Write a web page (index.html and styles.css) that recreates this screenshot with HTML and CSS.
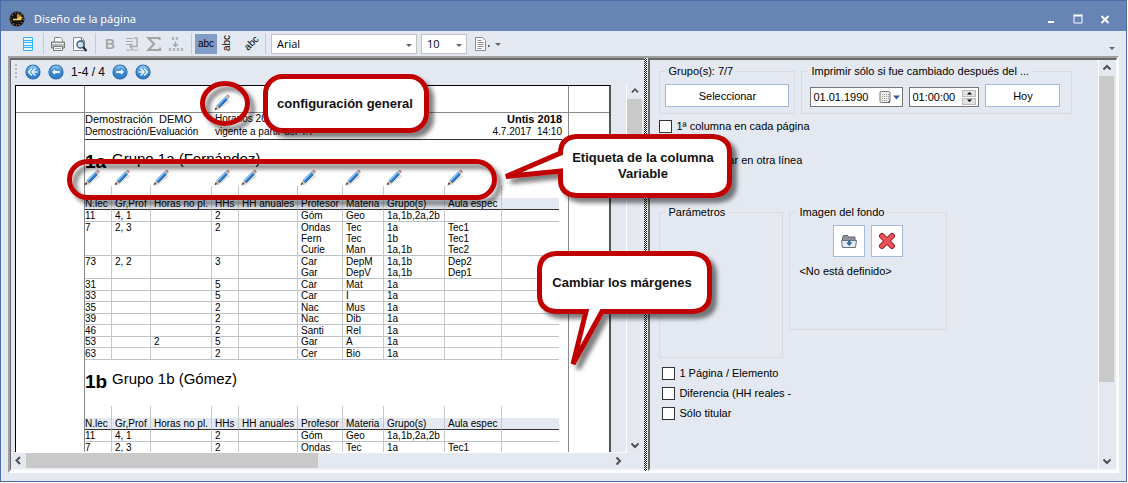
FILE: index.html
```html
<!DOCTYPE html>
<html lang="es">
<head>
<meta charset="utf-8">
<title>Diseño de la página</title>
<link rel="stylesheet" href="styles.css">
</head>
<body>
<svg class="defs" width="0" height="0" aria-hidden="true">
  <defs>
    <linearGradient id="ball" x1="0" y1="0" x2="0" y2="1"><stop offset="0" stop-color="#9fd0f3"/><stop offset=".45" stop-color="#3c8fd6"/><stop offset="1" stop-color="#2a7bc8"/></linearGradient>
    <symbol id="pencil" viewBox="0 0 17 17">
      <path d="M3 16 15.500 6.500" stroke="#000" stroke-opacity=".15" stroke-width="2"/>
      <path d="M.8 16 2.500 11.300 5.300 13.900z" fill="#dcb489"/>
      <path d="M.6 16.200 1.500 13.500 3.300 15.100z" fill="#333"/>
      <path d="M2.500 11.300 11 2.800 13.600 5.600 5.300 13.900z" fill="#2f7fd0"/>
      <path d="M5.100 13.700 13.400 5.400" stroke="#2b5c94"/>
      <path d="M3.200 11.700 11.500 3.400" stroke="#a5d2f7" stroke-width="1.300"/>
      <path d="M11 2.800 12.600 1.300 15.200 4.100 13.600 5.600z" fill="#b4bac2"/>
      <path d="M12.600 1.300Q13.800.3 15 1.500T15.200 4.100z" fill="#cf7a70"/>
    </symbol>
    <symbol id="ball-left" viewBox="0 0 16 16"><circle cx="8" cy="8" r="7" fill="url(#ball)" stroke="#2a6cb0" stroke-width="1.200"/><path d="M3.500 8 7.500 4.300v2.200h4.800v3H7.500v2.200z" fill="#e8f4fd" stroke="#1d5b9e" stroke-width=".5"/></symbol>
    <symbol id="ball-first" viewBox="0 0 16 16"><circle cx="8" cy="8" r="7" fill="url(#ball)" stroke="#2a6cb0" stroke-width="1.200"/><path d="M7 4.500 3.600 8 7 11.500M12.800 8H7.500M10.500 4.500 7 8 10.500 11.500" fill="none" stroke="#e8f4fd" stroke-width="1.600"/></symbol>
    <symbol id="up" viewBox="0 0 16 16"><path d="M4.500 9.500 8 6l3.500 3.500" fill="none" stroke="#505050" stroke-width="2"/></symbol>
  </defs>
</svg>

<div class="window">
  <header class="titlebar">
    <svg class="logo" width="16" height="16" viewBox="0 0 16 16"><circle cx="8" cy="8" r="7.500" fill="#17120e"/><circle cx="8" cy="8" r="6" fill="none" stroke="#a9834c" stroke-width="1.400" stroke-dasharray="1 2.140"/><path d="M8 8.500 8 3A5 5 0 0 1 13 8.500z" fill="#c98d2c"/><path d="M8 8.500 12.500 6M4 8.500h8" stroke="#f9cf63" stroke-width="1.300"/></svg>
    <h1>Diseño de la página</h1>
    <button class="win" aria-label="Minimizar"><svg width="10" height="10"><path d="M2 8h6" stroke="#fff" stroke-width="2"/></svg></button>
    <button class="win" aria-label="Maximizar"><svg width="10" height="10"><path d="M1 1.500h8v7.500H1z" fill="none" stroke="#fff"/><path d="M.5 1.500h9" stroke="#fff" stroke-width="2"/></svg></button>
    <button class="win" aria-label="Cerrar"><svg width="10" height="10"><path d="M1.500 2 8.500 9M8.500 2 1.500 9" stroke="#fff" stroke-width="1.800"/></svg></button>
  </header>

  <div class="toolbar">
    <button class="tool" aria-label="Lista"><svg width="16" height="16"><path d="M3.500 1.500h9v3h-9zM3.500 6.500h9v3h-9zM3.500 11.500h9v3h-9zM3.500 4.500v8M12.500 4.500v8" fill="#e6f7ff" stroke="#35b0f4"/></svg></button>
    <span class="sep"></span>
    <button class="tool" aria-label="Imprimir"><svg width="16" height="16"><path d="M4.500 6V1.500h6l2 2V6" fill="#fff" stroke="#888"/><path d="M1.500 6h13v6h-13z" fill="#b4b8bc" stroke="#777"/><path d="M2 7.500h12" stroke="#eee"/><path d="M3.500 10.500h9v4h-9z" fill="#fafafa" stroke="#777"/><path d="M5 12.500h6" stroke="#aaa"/></svg></button>
    <button class="tool" aria-label="Vista previa"><svg width="16" height="16"><path d="M1.500 1.500h8l3 3v10h-11z" fill="#fff" stroke="#8c8c8c"/><path d="M9.500 1.500v3h3" fill="none" stroke="#8c8c8c"/><circle cx="8.500" cy="8.500" r="3.500" fill="#c4e3f7" stroke="#3d5368" stroke-width="1.300"/><path d="M11 11l3.500 4" stroke="#26313e" stroke-width="2.200"/></svg></button>
    <span class="sep"></span>
    <button class="tool bold" aria-label="Negrita"><b>B</b></button>
    <button class="tool" aria-label="Ajustar"><svg width="16" height="16"><path d="M2 2.500h7M2 5.500h7M2 8.500h5M2 14h12.500" stroke="#a8a8a8"/><path d="M10 2h3v8.500H6M8.500 8 6 10.500 8.500 13" fill="none" stroke="#aaa" stroke-width="1.400"/></svg></button>
    <button class="tool" aria-label="Suma"><svg width="16" height="16"><path d="M13.500 4V2H2.500L8 8l-5.500 6H14v-2.500" fill="none" stroke="#a5a5a5" stroke-width="2.200"/></svg></button>
    <button class="tool" aria-label="Insertar línea"><svg width="16" height="16"><path d="M4 1l2 3M6 1 4 4M8 1l2 3M10 1 8 4M1 12l2 3M3 12l-2 3M5 12l2 3M7 12l-2 3M9 12l2 3M11 12l-2 3M13 12l2 3M15 12l-2 3" stroke="#999" stroke-width=".8"/><path d="M7.500 5.500v4M5 8l2.500 2.500L10 8" stroke="#a5a5a5" fill="none" stroke-width="1.300"/></svg></button>
    <span class="sep"></span>
    <button class="tool active" aria-label="Horizontal"><svg width="20" height="20"><text class="abc" x="2" y="13">abc</text></svg></button>
    <button class="tool" aria-label="Vertical"><svg width="20" height="20"><text class="abc" transform="translate(12 17) rotate(-90)">abc</text></svg></button>
    <button class="tool" aria-label="Diagonal"><svg width="20" height="20"><text class="abc" transform="translate(8 17) rotate(-45)">abc</text></svg></button>
    <span class="sep"></span>
    <span class="combo font"><select aria-label="Fuente"><option>Arial</option></select></span>
    <span class="combo size"><select aria-label="Tamaño"><option>10</option></select></span>
    <button class="tool doc" aria-label="Página"><svg width="28" height="16"><path d="M1.500 1.500h7l3 3v10h-10z" fill="#fff" stroke="#8c8c8c"/><path d="M3.500 4.500h4M3.500 6.500h6M3.500 8.500h6M3.500 10.500h6M3.500 12.500h4" stroke="#8c8c8c"/><path d="M14 9h1.500v2H14z" fill="#555"/><path d="M21 7h6l-3 3z" fill="#666"/></svg></button>
    <button class="more" aria-label="Más"><svg width="6" height="4"><path d="M0 0h6L3 3z" fill="#666"/></svg></button>
  </div>

  <main class="workspace">
    <section class="left">
      <nav class="pager">
        <span class="grip"></span>
        <button aria-label="Primera"><svg width="16" height="16"><use href="#ball-first"/></svg></button>
        <button aria-label="Anterior"><svg width="16" height="16"><use href="#ball-left"/></svg></button>
        <span class="count">1-4 / 4</span>
        <button class="flip" aria-label="Siguiente"><svg width="16" height="16"><use href="#ball-left"/></svg></button>
        <button class="flip" aria-label="Última"><svg width="16" height="16"><use href="#ball-first"/></svg></button>
      </nav>
      <div class="view">
        <div class="preview">
          <article class="paper">
            <div class="margin corner"></div>
            <div class="margin top"><svg class="pencil" width="17" height="17"><use href="#pencil"/></svg></div>
            <div class="margin end"></div>
            <div class="side"></div>
            <div class="content">
              <header class="report">
                <span class="big">Demostración&nbsp; DEMO</span><span class="big mid">Horarios 2017</span><b class="big">Untis 2018</b>
                <span>Demostración/Evaluación</span><span>vigente a partir del 4.7</span><span>4.7.2017&nbsp; 14:10</span>
              </header>
              <h2 class="group"><b>1a</b><span>Grupo 1a (Fernández)</span></h2>
              <table class="plan">
                <colgroup><col class="c27"><col class="c39"><col class="c61"><col class="c27"><col class="c59"><col class="c45"><col class="c41"><col class="c61"><col class="c57"><col class="c57"></colgroup>
                <thead>
                  <tr class="pencils"><td><svg width="17" height="17"><use href="#pencil"/></svg></td><td><svg width="17" height="17"><use href="#pencil"/></svg></td><td><svg width="17" height="17"><use href="#pencil"/></svg></td><td><svg width="17" height="17"><use href="#pencil"/></svg></td><td><svg width="17" height="17"><use href="#pencil"/></svg></td><td><svg width="17" height="17"><use href="#pencil"/></svg></td><td><svg width="17" height="17"><use href="#pencil"/></svg></td><td><svg width="17" height="17"><use href="#pencil"/></svg></td><td><svg width="17" height="17"><use href="#pencil"/></svg></td><td></td></tr>
                  <tr><th>N.lec</th><th>Gr,Prof</th><th>Horas no pl.</th><th>HHs</th><th>HH anuales</th><th>Profesor</th><th>Materia</th><th>Grupo(s)</th><th>Aula espec</th><th></th></tr>
                </thead>
                <tbody>
                  <tr><td>11</td><td>4, 1</td><td></td><td>2</td><td></td><td>Góm</td><td>Geo</td><td>1a,1b,2a,2b</td><td></td><td></td></tr>
                  <tr><td>7</td><td>2, 3</td><td></td><td>2</td><td></td><td>Ondas<br>Fern<br>Curie</td><td>Tec<br>Tec<br>Man</td><td>1a<br>1b<br>1a,1b</td><td>Tec1<br>Tec1<br>Tec2</td><td></td></tr>
                  <tr><td>73</td><td>2, 2</td><td></td><td>3</td><td></td><td>Car<br>Gar</td><td>DepM<br>DepV</td><td>1a,1b<br>1a,1b</td><td>Dep2<br>Dep1</td><td></td></tr>
                  <tr><td>31</td><td></td><td></td><td>5</td><td></td><td>Car</td><td>Mat</td><td>1a</td><td></td><td></td></tr>
                  <tr class="tight"><td>33</td><td></td><td></td><td>5</td><td></td><td>Car</td><td>I</td><td>1a</td><td></td><td></td></tr>
                  <tr><td>35</td><td></td><td></td><td>2</td><td></td><td>Nac</td><td>Mus</td><td>1a</td><td></td><td></td></tr>
                  <tr class="tight"><td>39</td><td></td><td></td><td>2</td><td></td><td>Nac</td><td>Dib</td><td>1a</td><td></td><td></td></tr>
                  <tr><td>46</td><td></td><td></td><td>2</td><td></td><td>Santi</td><td>Rel</td><td>1a</td><td></td><td></td></tr>
                  <tr class="tight"><td>53</td><td></td><td>2</td><td>5</td><td></td><td>Gar</td><td>A</td><td>1a</td><td></td><td></td></tr>
                  <tr><td>63</td><td></td><td></td><td>2</td><td></td><td>Cer</td><td>Bio</td><td>1a</td><td></td><td></td></tr>
                </tbody>
              </table>
              <h2 class="group"><b>1b</b><span>Grupo 1b (Gómez)</span></h2>
              <table class="plan">
                <colgroup><col class="c27"><col class="c39"><col class="c61"><col class="c27"><col class="c59"><col class="c45"><col class="c41"><col class="c61"><col class="c57"><col class="c57"></colgroup>
                <thead>
                  <tr class="pencils"><td></td><td></td><td></td><td></td><td></td><td></td><td></td><td></td><td></td><td></td></tr>
                  <tr><th>N.lec</th><th>Gr,Prof</th><th>Horas no pl.</th><th>HHs</th><th>HH anuales</th><th>Profesor</th><th>Materia</th><th>Grupo(s)</th><th>Aula espec</th><th></th></tr>
                </thead>
                <tbody>
                  <tr><td>11</td><td>4, 1</td><td></td><td>2</td><td></td><td>Góm</td><td>Geo</td><td>1a,1b,2a,2b</td><td></td><td></td></tr>
                  <tr><td>7</td><td>2, 3</td><td></td><td>2</td><td></td><td>Ondas</td><td>Tec</td><td>1a</td><td>Tec1</td><td></td></tr>
                </tbody>
              </table>
            </div>
            <div class="side end"></div>
          </article>
        </div>
        <div class="vbar"><svg width="16" height="14" viewBox="0 1 16 14"><use href="#up"/></svg><span class="thumb short"></span><svg class="down" width="16" height="16"><use href="#up"/></svg></div>
      </div>
      <div class="hbar"><svg class="west" width="15" height="16"><use href="#up" width="16" height="16"/></svg><span class="thumb wide"></span><svg class="east" width="16" height="16"><use href="#up"/></svg></div>
    </section>

    <div class="splitter"></div>

    <section class="right">
      <form class="options">
        <div class="row">
          <fieldset class="pick"><legend>Grupo(s): 7/7</legend><button type="button" class="btn grow">Seleccionar</button></fieldset>
          <fieldset class="when"><legend>Imprimir sólo si fue cambiado después del ...</legend>
            <span class="field date"><input type="text" aria-label="Fecha" value="01.01.1990"><button type="button" aria-label="Calendario"><svg width="22" height="14"><rect x="1" y="1.500" width="10" height="11" rx="1.500" fill="#eee" stroke="#777"/><path d="M3 4.500h7M3 6.500h7M3 8.500h7M3 10.500h5" stroke="#999" stroke-dasharray="1 1"/><path d="M8 13l3-3v3z" fill="#666"/><path d="M14 5.500h7l-3.500 4z" fill="#345e9e"/></svg></button></span>
            <span class="field time"><input type="text" aria-label="Hora" value="01:00:00"><span class="spin"><button type="button" aria-label="Más"><svg width="7" height="4"><path d="M1 3.500h5L3.500 1z"/></svg></button><button type="button" aria-label="Menos"><svg width="7" height="4"><path d="M1 .5h5L3.500 3z"/></svg></button></span></span>
            <button type="button" class="btn grow">Hoy</button>
          </fieldset>
        </div>
        <label class="check first"><input type="checkbox">1ª columna en cada página</label>
        <label class="check second"><input type="checkbox">Continuar en otra línea</label>
        <div class="row boxes">
          <fieldset class="params"><legend>Parámetros</legend></fieldset>
          <fieldset class="image"><legend>Imagen del fondo</legend>
            <div class="pair">
              <button type="button" class="btn sq" aria-label="Abrir"><svg width="18" height="18"><path d="M2.500 15V5.500l1-2h4l1 1.500h6.500V9" fill="#8c939b" stroke="#5e656c"/><path d="M1.500 8.500h15l-1 7h-13z" fill="#e4ebf3" stroke="#67727e"/><path d="M8 8.500h2.500v2h2L9.200 14 6 10.500h2z" fill="#3c6a9c"/></svg></button>
              <button type="button" class="btn sq" aria-label="Borrar"><svg width="18" height="18"><path d="M4 4 14 14M14 4 4 14" stroke="#8e2630" stroke-width="6" stroke-linecap="round"/><path d="M4 4 14 14M14 4 4 14" stroke="#ee5057" stroke-width="4" stroke-linecap="round"/></svg></button>
            </div>
            <p>&lt;No está definido&gt;</p>
          </fieldset>
        </div>
        <div class="checks">
          <label class="check"><input type="checkbox">1 Página / Elemento</label>
          <label class="check"><input type="checkbox">Diferencia (HH reales -</label>
          <label class="check"><input type="checkbox">Sólo titular</label>
        </div>
      </form>
      <div class="vbar"><svg width="16" height="16"><use href="#up"/></svg><span class="thumb tall"></span><svg class="down" width="16" height="16"><use href="#up"/></svg></div>
    </section>
  </main>

</div>

<svg class="notes" width="1128" height="483" viewBox="0 0 1128 483">
  <defs><filter id="shade" x="-20%" y="-20%" width="150%" height="160%"><feDropShadow dx="5" dy="5" stdDeviation="2" flood-color="#000" flood-opacity=".5"/></filter></defs>
  <g fill="none" stroke="#c00000" stroke-width="5">
    <ellipse cx="225" cy="103.500" rx="22.500" ry="20" filter="url(#shade)"/>
    <rect x="69.500" y="161.500" width="425" height="36" rx="18" filter="url(#shade)"/>
    <rect x="265.500" y="76.500" width="161" height="54" rx="17" fill="#fff" filter="url(#shade)"/>
    <path fill="#fff" filter="url(#shade)" d="M576 136.500H713Q729.500 138 729.500 152V180Q729.500 194 713 195.500H576Q560.500 194 560.500 180V171L506 176.500 560.500 153Q560.500 138 576 136.500z"/>
    <path fill="#fff" filter="url(#shade)" d="M556 253.500H693Q709.500 255 709.500 270V295Q709.500 310 693 311.500H602L573 364 586 311.500H556Q539.500 310 539.500 295V270Q539.500 255 556 253.500z"/>
  </g>
  <g class="note">
    <text x="345" y="108">configuración general</text>
    <text x="643" y="162">Etiqueta de la columna</text>
    <text x="643" y="178">Variable</text>
    <text x="622" y="287">Cambiar los márgenes</text>
  </g>
</svg>
</body>
</html>
```
FILE: styles.css
```css
* { box-sizing: border-box; }
body { margin: 0; background: #fff; color: #000; font: 11px/14px "Liberation Sans", Arial, sans-serif; }
button, input, select { font: inherit; color: inherit; margin: 0; padding: 0; border: 0; background: none; }
button { display: flex; align-items: center; justify-content: center; }
svg { display: block; flex: none; }
.defs, .notes { position: absolute; top: 0; left: 0; }
.notes { pointer-events: none; }
.note text { font: bold 13px "Liberation Sans", Arial, sans-serif; fill: #111; text-anchor: middle; }

.window { display: flex; flex-direction: column; height: calc(100vh - 1px); margin-right: 1px; background: #e4e9f1; border: 1px solid #4a6ea9; overflow: hidden; }
.titlebar { display: flex; align-items: center; height: 30px; padding: 6px 12px 0 8px; background: #6684b4; color: #fff; }
.titlebar h1 { flex: 1; margin: 0 0 0 9px; font: 11px/16px "Noto Sans", sans-serif; }
.win { width: 18px; height: 18px; margin-left: 9px; }

.toolbar { display: flex; align-items: center; height: 25px; padding: 0 10px 0 16px; flex: none; }
.tool { width: 22px; height: 20px; flex: none; }
.tool.active { background: #829cc8; }
.tool.doc { width: 30px; margin-left: 6px; }
.tool.bold { color: #a5a5a5; font-size: 14px; }
.abc { font: 10px "Liberation Sans", sans-serif; }
.sep { width: 1px; height: 21px; margin: 0 3px 0 4px; background: #c6cad0; }
.combo { position: relative; height: 20px; border: 1px solid #c3c3c3; background: #fff; margin-left: 2px; }
.combo::after { content: ""; position: absolute; right: 4px; top: 9px; border: 3px solid transparent; border-top-color: #666; border-bottom: 0; }
.combo select { width: 100%; height: 18px; padding-left: 5px; appearance: none; font: 11px/18px "Open Sans", sans-serif; }
.font { width: 146px; }
.size { width: 46px; margin-left: 4px; }
.more { margin: 10px 1px 0 auto; }

.workspace { flex: 1; min-height: 0; display: grid; grid-template-columns: minmax(0, 635fr) 4px minmax(0, 469fr); margin: 0 7px 8px 7px; border: 2px solid #a0a0a0; border-right-color: #fff; border-bottom-color: #fff; }
.left { display: flex; flex-direction: column; min-height: 0; border: solid #696969; border-width: 2px 0 0 1px; border-bottom: 2px solid #f5f7fa; }
.pager { display: flex; align-items: center; height: 25px; padding: 0 0 2px 4px; flex: none; }
.grip { width: 2px; height: 15px; margin-right: 8px; background: repeating-linear-gradient(#b4b8be 0 2px, transparent 2px 4px); }
.pager button { width: 16px; height: 16px; margin-right: 7px; }
.count { width: 41px; font-size: 12px; }
.flip svg { transform: scaleX(-1); }
.view { flex: 1; display: flex; min-height: 0; }
.preview { flex: 1; min-width: 0; overflow: hidden; padding-left: 4px; border-right: 1px solid #fff; border-bottom: 1px solid #fff; }
.vbar { width: 16px; margin-right: 1px; display: flex; flex-direction: column; }
.thumb { background: #c9c9c9; }
.vbar .thumb { margin-right: 1px; }
.vbar .down { margin-top: auto; transform: scaleY(-1); }
.short { height: 50px; }
.tall { flex: 0 0 306px; }
.hbar { display: flex; height: 16px; flex: none; margin-right: 18px; }
.wide { width: 292px; height: 15px; }
.west { transform: rotate(-90deg); }
.east { margin-left: auto; transform: rotate(90deg); }

.paper { display: grid; grid-template: 27px auto / 68px 1fr 40px; width: 596px; min-height: 600px; background: #fff; border: 1px solid #000; border-right: 2px solid #555; }
.margin { border-bottom: 1px solid #8a8a8a; }
.top { padding: 8px 0 0 129px; }
.top, .content { border-left: 1px solid #8a8a8a; border-right: 1px solid #8a8a8a; }
.report { display: grid; grid-template-columns: 130px 1fr auto; grid-template-rows: 12px 14px; margin-right: 6px; border-bottom: 1px solid #333; font-size: 10px; line-height: 14px; white-space: nowrap; }
.report .big { font-size: 11px; line-height: 12px; }
.report .mid { font-size: 10px; }
.report > :nth-child(3n) { text-align: right; }
.group { display: grid; grid-template-columns: 27px 1fr; height: 46px; margin: 0; padding-top: 9px; font: 15px/20px "Liberation Sans", Arial, sans-serif; }
.group b { font-size: 19px; margin-top: 3px; }
.plan { table-layout: fixed; width: 474px; border-spacing: 0; font-size: 10px; line-height: 11px; white-space: nowrap; }
.plan td, .plan th { height: 12px; padding: 0 0 0 3px; border-right: 1px solid #c4c8cc; border-bottom: 1px solid #bcc2c8; text-align: left; vertical-align: top; font-weight: normal; }
.plan td:first-child, .plan th:first-child { padding-left: 0; }
.plan td:last-child, .plan th:last-child { border-right: 0; }
.plan th { background: #e4e9f1; border-bottom-color: #333; }
.plan .pencils td { position: relative; border-bottom: 0; }
.pencils svg { position: absolute; top: -17px; margin-left: -1px; }
.plan .tight td { height: 11px; line-height: 10px; }
.c27 { width: 27px; } .c39 { width: 39px; } .c41 { width: 41px; } .c45 { width: 45px; }
.c57 { width: 57px; } .c59 { width: 59px; } .c61 { width: 61px; }

.splitter { margin-right: 1px; background: repeating-conic-gradient(#111 0 25%, #fff 0 50%) 0 0 / 2px 2px; }
.right { display: flex; min-width: 0; border: solid #696969; border-width: 2px 0 0 2px; border-bottom: 2px solid #f5f7fa; border-right: 1px solid #f5f7fa; }
.right .vbar { margin-right: 1px; border-left: 1px solid #fff; width: 17px; }
.options { flex: 1; min-width: 0; overflow: hidden; padding: 4px 0 0 9px; }
.row { display: flex; gap: 6px; }
fieldset { display: flex; gap: 6px; align-items: flex-end; margin: 0; min-width: 0; padding: 6px 5px; border: 1px solid #d8dade; }
legend { padding: 0 3px; margin-left: 0; line-height: 14px; }
.pick { width: 136px; height: 50px; }
.when { width: 271px; height: 50px; padding: 6px 11px 6px 8px; }
.when legend, .image legend { margin-left: -2px; }
.btn { height: 23px; border: 1px solid #a5bad8; background: #fff; }
.grow { flex: 1; }
.field { display: flex; align-items: center; height: 20px; border: 1px solid #777; background: #fff; }
.field input { flex: 1; min-width: 0; padding-left: 2px; }
.date { width: 93px; }
.date button { width: 24px; }
.time { width: 70px; }
.spin { display: grid; gap: 1px; margin-right: 2px; }
.spin button { width: 14px; height: 7px; background: #e2e2e2; border: 1px solid #bbb; }
.check { display: flex; align-items: center; gap: 4px; height: 14px; }
.check input { appearance: none; width: 13px; height: 13px; border: 1px solid #333; background: #fff; }
.first { margin-top: 5px; }
.second { margin: 20px 0 0 14px; }
.boxes { margin-top: 38px; align-items: flex-start; }
.params { width: 124px; height: 153px; }
.image { width: 158px; height: 125px; display: block; padding: 6px 8px; }
.pair { display: flex; gap: 6px; padding-left: 35px; }
.sq { width: 32px; height: 32px; }
.image p { margin: 7px 0 0 1px; }
.checks { display: grid; gap: 6px; margin: 8px 0 0 3px; }
```
